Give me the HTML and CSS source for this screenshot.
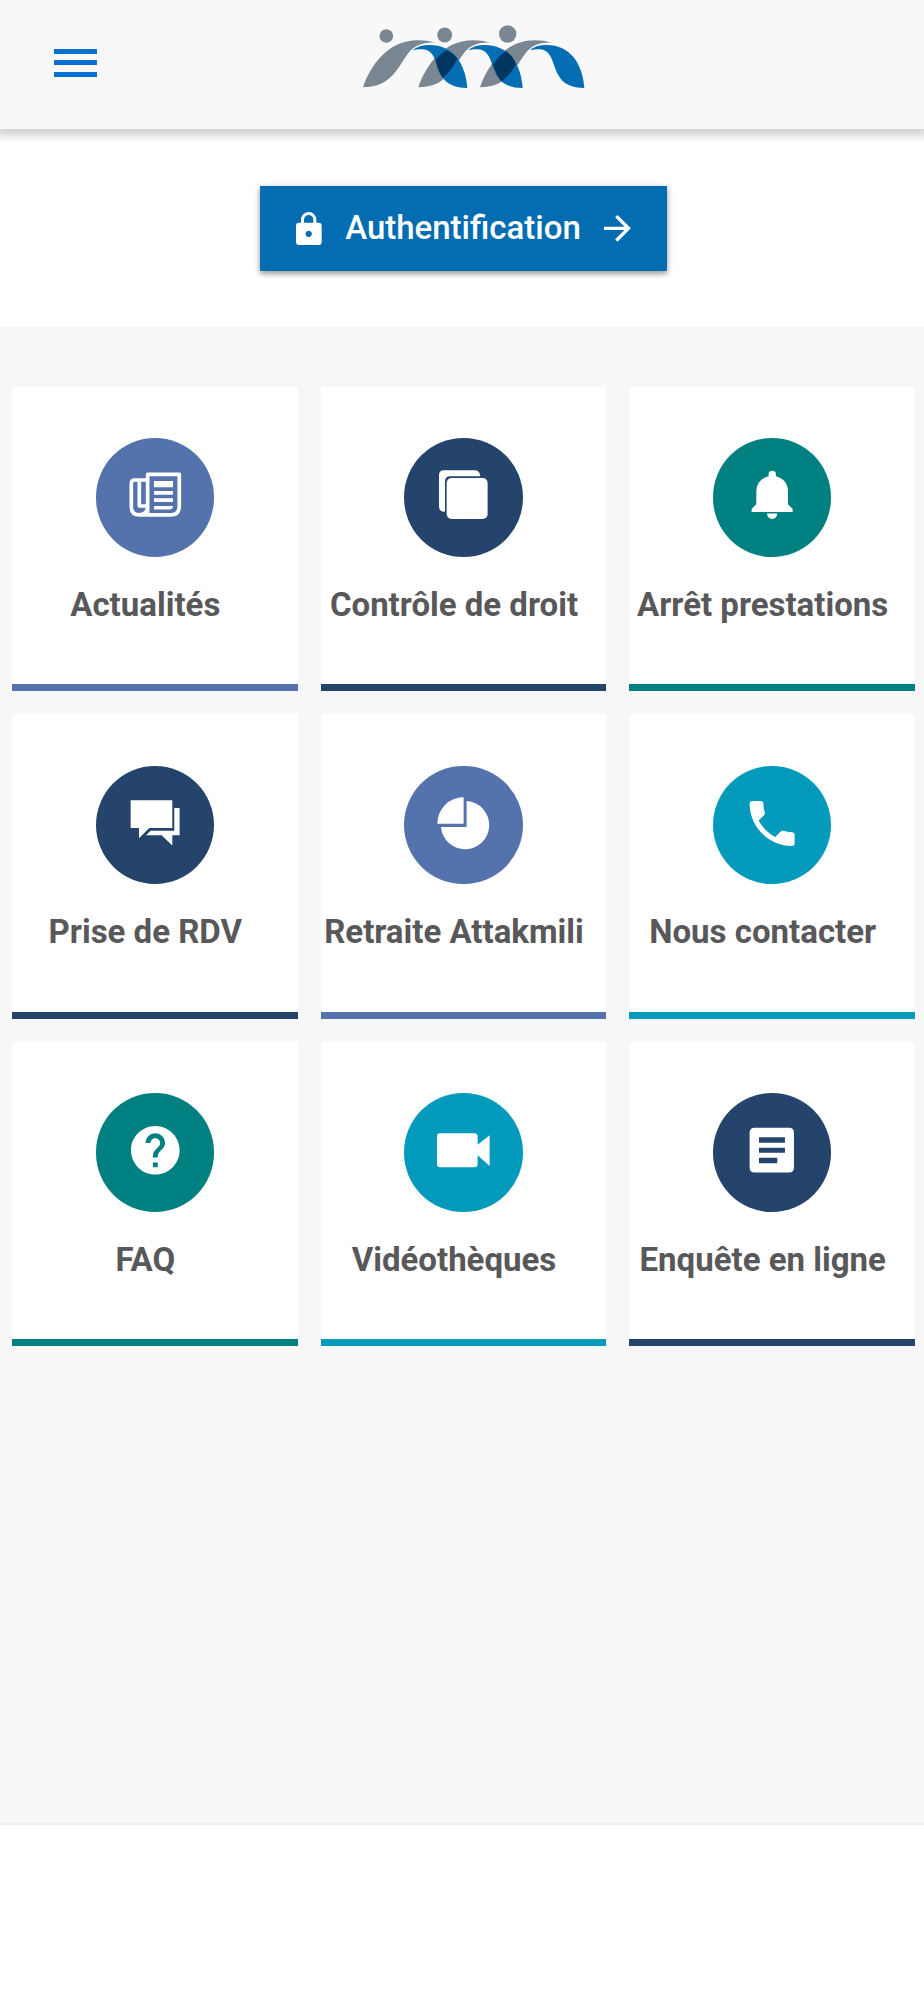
FILE: index.html
```html
<!DOCTYPE html>
<html lang="fr">
<head>
<meta charset="utf-8">
<title>Accueil</title>
<link rel="stylesheet" href="styles.css">
</head>
<body>
<header class="header">
  <button class="menu" aria-label="Menu"><span class="menu-line"></span><span class="menu-line"></span><span class="menu-line"></span></button>
  <svg class="logo" viewBox="0 0 780 270">
    <g fill="#7a8793">
      <circle cx="139" cy="78" r="20.500"/><circle cx="314" cy="75" r="22.500"/><circle cx="503" cy="72" r="26"/>
      <path d="M69 232C91 168 143 91 233 91Q260 91 288 98C248 95 222 107 203 132C177 166 155 232 69 232Z"/>
      <path d="M235 232C257 168 309 91 399 91Q426 91 453 98C413 95 388 107 370 132C343 166 321 232 235 232Z"/>
      <path d="M420 232C442 168 494 91 584 91Q611 91 638 98C598 95 573 107 555 132C528 166 506 232 420 232Z"/>
    </g>
    <g fill="#046eb5">
      <path d="M218 121Q236 105 269 105C336 105 377 157 382 234C344 234 318 221 306 199C286 166 287 119 247 118Q233 117 218 121Z"/>
      <path d="M384 121Q402 105 435 105C502 105 543 157 548 234C510 234 484 221 472 199C452 166 453 119 413 118Q399 117 384 121Z"/>
      <path d="M569 121Q587 105 620 105C687 105 728 157 733 234C695 234 669 221 657 199C637 166 638 119 598 118Q584 117 569 121Z"/>
    </g>
    <g fill="#00365f">
      <path d="M319 121Q341 130 352 146Q337 178 308 204Q290 177 287 149Q301 131 319 121Z"/>
      <path d="M497 123Q518 136 528 162Q513 192 485 214Q467 195 459 163Q475 139 497 123Z"/>
    </g>
  </svg>
</header>
<section class="auth">
  <button class="auth-button">
    <svg class="lock" viewBox="168 126 77 99"><path fill="none" stroke="#fff" stroke-width="9" d="M187.500 160V149a18.500 18.500 0 0 1 37 0V160"/><path fill="#fff" fill-rule="evenodd" d="M177 158H236Q245 158 245 167V216Q245 225 236 225H177Q168 225 168 216V167Q168 158 177 158ZM206 182a9.500 9.500 0 1 0 .1 0Z"/></svg>
    <span class="auth-label">Authentification</span>
    <svg class="arrow" viewBox="1092 137 80 80"><path fill="none" stroke="#fff" stroke-width="10" d="M1092 177H1165M1129 140.500L1165.500 177L1129 213.500"/></svg>
  </button>
</section>
<main class="grid">
  <a class="card periwinkle">
    <span class="disc"><svg class="icon" viewBox="286 204 356 356"><g fill="none" stroke="#fff" stroke-width="11" stroke-linejoin="round"><path d="M441 434V313H536V408Q536 435 511 435H416Q392 435 392 410V340Q392 330 402 330H437M416 333V408H439M441 408Q441 434 417 434"/></g><path fill="#fff" d="M460 333H517V352H460ZM460 363H517V374H460ZM460 385H517V396H460ZM460 408H517Q516 419 507 419H460Z"/></svg></span>
    <span class="label">Actualités</span>
  </a>
  <a class="card navy">
    <span class="disc"><svg class="icon" viewBox="283 204 356 356"><path fill="#fff" d="M512 319H422Q406 319 406 335V425Q388 427 388 408V316Q388 301 403 301H495Q510 301 512 319Z"/><rect x="411" y="324" width="123" height="123" rx="15" fill="#fff"/></svg></span>
    <span class="label">Contrôle de droit</span>
  </a>
  <a class="card teal">
    <span class="disc"><svg class="icon" viewBox="298 204 356 356"><path fill="#fff" d="M465 319V313A11 11 0 0 1 487 313V319Q523 329 523 365V403L537 417V426H414V417L428 403V365Q428 329 465 319ZM460 431H491Q489 447 476 447Q462 447 460 431Z"/></svg></span>
    <span class="label">Arrêt prestations</span>
  </a>
  <a class="card navy">
    <span class="disc"><svg class="icon" viewBox="286 197 356 356"><path fill="#fff" d="M390 300H515V383H446L415 414V383H390ZM521 323H537V405H515V436L483 405H436L450 391H521Z"/></svg></span>
    <span class="label">Prise de RDV</span>
  </a>
  <a class="card periwinkle">
    <span class="disc"><svg class="icon" viewBox="283 197 356 356"><path fill="#fff" d="M462 291V370H383Q383 338 406 314Q429 291 462 291ZM471 302A72.500 72.500 0 1 1 394 380H471Z"/></svg></span>
    <span class="label">Retraite Attakmili</span>
  </a>
  <a class="card cyan">
    <span class="disc"><svg class="icon" viewBox="298 197 356 356"><path fill="#fff" transform="translate(385.500 279.500) scale(7.500)" d="M6.620 10.790c1.440 2.830 3.760 5.140 6.590 6.590l2.200-2.200c.27-.27.67-.36 1.020-.24 1.120.37 2.330.57 3.570.57.55 0 1 .45 1 1V20c0 .55-.45 1-1 1-9.390 0-17-7.610-17-17 0-.55.45-1 1-1h3.500c.55 0 1 .45 1 1 0 1.250.2 2.450.57 3.570.11.35.03.74-.25 1.020l-2.200 2.200z"/></svg></span>
    <span class="label">Nous contacter</span>
  </a>
  <a class="card teal">
    <span class="disc"><svg class="icon" viewBox="0 0 356 356"><path fill="#fff" transform="translate(90.400 84.400) scale(7.300)" d="M12 2C6.480 2 2 6.480 2 12s4.480 10 10 10 10-4.480 10-10S17.520 2 12 2zm1 17h-2v-2h2v2zm2.070-7.750l-.9.920C13.450 12.900 13 13.500 13 15h-2v-.5c0-1.100.45-2.100 1.170-2.830l1.240-1.260c.37-.36.59-.86.59-1.410 0-1.100-.9-2-2-2s-2 .9-2 2H8c0-2.210 1.790-4 4-4s4 1.790 4 4c0 .88-.36 1.680-.93 2.250z"/></svg></span>
    <span class="label">FAQ</span>
  </a>
  <a class="card cyan">
    <span class="disc"><svg class="icon" viewBox="0 0 356 356"><path fill="#fff" d="M109 121H211Q221 121 221 131V155L257 127V219L221 187V213Q221 223 211 223H109Q99 223 99 213V131Q99 121 109 121Z"/></svg></span>
    <span class="label">Vidéothèques</span>
  </a>
  <a class="card navy">
    <span class="disc"><svg class="icon" viewBox="0 0 356 356"><path fill="#fff" fill-rule="evenodd" d="M125 104H228Q243 104 243 119V224Q243 239 228 239H125Q110 239 110 224V119Q110 104 125 104ZM138 133V149H216V133ZM138 164V179H216V164ZM138 194V211H193V194Z"/></svg></span>
    <span class="label">Enquête en ligne</span>
  </a>
</main>
<footer class="footer"></footer>
</body>
</html>
```
FILE: styles.css
```css
* { box-sizing: border-box; }
body { margin: 0; height: 2000px; display: flex; flex-direction: column; background: #fff; font-family: Roboto, "Liberation Sans", sans-serif; }
button { border: 0; padding: 0; font: inherit; }
.header { height: 129px; flex: none; display: flex; align-items: flex-start; background: #f8f8f8; box-shadow: 0 0 10px 6px rgba(0, 0, 0, .2); clip-path: inset(0 0 -14px 0); }
.menu { display: flex; flex-direction: column; gap: 6.500px; width: 43px; margin: 48.500px 0 0 54px; background: none; }
.menu-line { height: 5px; background: #0870d1; }
.logo { width: 260px; height: 90px; margin: 10px 0 0 243px; }
.auth { height: 198px; flex: none; display: flex; justify-content: center; align-items: flex-start; padding: 57px 0 0 3px; }
.auth-button { width: 407px; height: 85px; display: flex; align-items: center; padding: 0 36px; background: #046db2; color: #fff; box-shadow: 0 3px 5px rgba(0, 0, 0, .32), 0 1px 8px rgba(0, 0, 0, .14); }
.lock { width: 25.700px; height: 33px; flex: none; }
.auth-label { font-size: 33px; font-weight: 500; line-height: 40px; margin: 0 auto; padding-bottom: 2px; white-space: nowrap; }
.arrow { width: 26.700px; height: 26.700px; flex: none; }
.grid { flex: none; height: 1496px; display: grid; grid-template-columns: repeat(3, 285.600px); grid-auto-rows: 304.500px; gap: 23px 23.100px; padding: 59.500px 0 0 12px; background: #f7f7f7; }
.card { display: flex; flex-direction: column; align-items: center; padding-top: 51.500px; background: #fff; border-bottom: 7px solid var(--tone); }
.disc { width: 118.600px; height: 118.600px; border-radius: 50%; background: var(--tone); }
.icon { display: block; width: 100%; height: 100%; }
.label { margin-top: 28px; padding-right: 19px; color: #58585a; font-size: 33px; font-weight: 700; line-height: 40px; white-space: nowrap; }
.periwinkle { --tone: #5473ad; }
.navy { --tone: #25446b; }
.teal { --tone: #008080; }
.cyan { --tone: #039abb; }
.footer { flex: 1; border-top: 2px solid #efefef; }
```
